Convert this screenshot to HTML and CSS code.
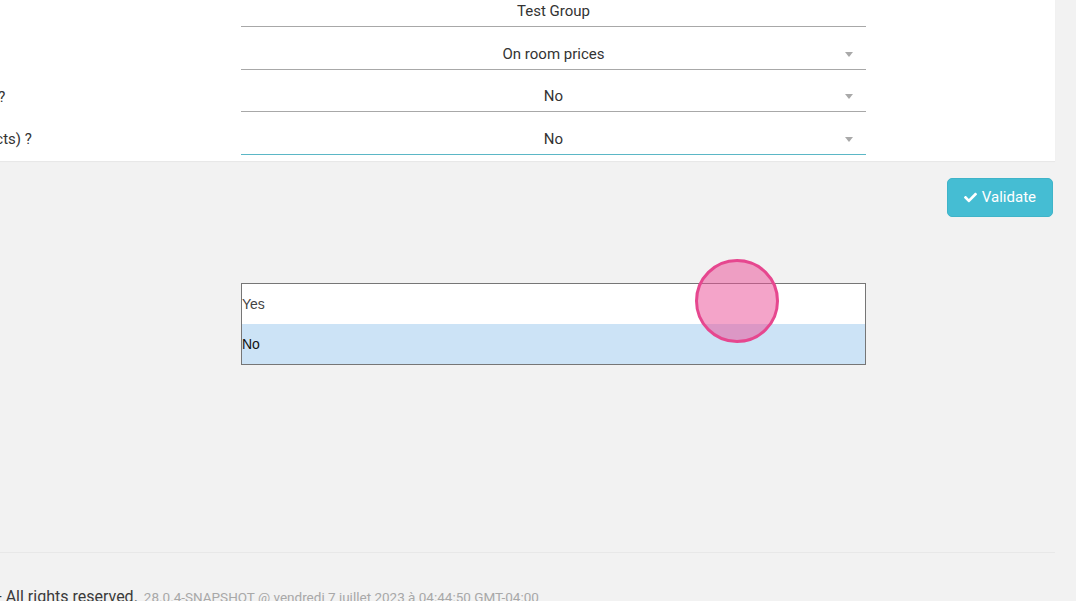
FILE: index.html
```html
<!DOCTYPE html>
<html lang="en">
<head>
    <meta charset="UTF-8">
    <meta name="viewport" content="width=device-width, initial-scale=1.0">
    <title>Group reduction</title>
    <link rel="stylesheet" href="styles.css">
</head>
<body>
    <div class="page">
        <div class="card">
            <form class="form">
                <div class="row">
                    <label>Name</label>
                    <div class="field">Test Group</div>
                </div>
                <div class="row">
                    <label>Reduction</label>
                    <div class="field select">On room prices</div>
                </div>
                <div class="row">
                    <label>Display prices with the taxes for this group ?</label>
                    <div class="field select">No</div>
                </div>
                <div class="row">
                    <label>Hide the prices on all extra services (products) ?</label>
                    <div class="field select focused">No</div>
                </div>
            </form>
        </div>

        <div class="actions">
            <button class="btn-validate">
                <svg class="icon-check" viewBox="0 0 512 512"><path d="M173.9 439.4l-166.4-166.4c-10-10-10-26.2 0-36.2l36.2-36.2c10-10 26.2-10 36.2 0L192 312.7 432.1 72.6c10-10 26.2-10 36.2 0l36.2 36.2c10 10 10 26.2 0 36.2l-294.4 294.4c-10 10-26.2 10-36.2 0z"/></svg>
                Validate
            </button>
        </div>

        <footer class="footer">
            <span class="copy">&copy; 2023 QloApps Hotel Booking </span><span class="rights">- All rights reserved.</span>
            <span class="version">28.0.4-SNAPSHOT @ vendredi 7 juillet 2023 à 04:44:50 GMT-04:00</span>
        </footer>
    </div>

    <div class="listbox">
        <div class="option">Yes</div>
        <div class="option selected">No</div>
    </div>

    <div class="touch"></div>
</body>
</html>
```

FILE: styles.css
```css
* {
    margin: 0;
    padding: 0;
    box-sizing: border-box;
}

body {
    font-family: 'Roboto', 'Liberation Sans', sans-serif;
    background: #f2f2f2;
    color: #333;
    overflow: hidden;
    width: 1076px;
    height: 601px;
}

.page {
    width: 1355px;
    margin: -24px 0 0 -300px;
}

.card {
    background: white;
    padding: 20px 0 6px;
    box-shadow: 0 1px 1px rgba(0,0,0,0.04);
}

.row {
    display: flex;
    align-items: center;
    height: 31px;
    margin-top: 11.5px;
}

.row:first-child {
    margin-top: 0;
}

.row label {
    width: 541px;
    padding-left: 12px;
    font-size: 15px;
    white-space: nowrap;
    overflow: hidden;
}

.field {
    position: relative;
    width: 625px;
    height: 31px;
    line-height: 30px;
    text-align: center;
    font-size: 15px;
    border-bottom: 1px solid #a8a8a8;
}

.field.focused {
    border-bottom-color: #5bb7c6;
}

.select::after {
    content: '';
    position: absolute;
    right: 13px;
    top: 13px;
    border-left: 4px solid transparent;
    border-right: 4px solid transparent;
    border-top: 5px solid #a9a9a9;
}

.actions {
    display: flex;
    justify-content: flex-end;
    padding: 17px 2px 0 0;
    height: 391px;
}

.btn-validate {
    display: flex;
    align-items: center;
    gap: 5px;
    height: 39px;
    padding: 0 16px;
    font-family: 'Roboto', sans-serif;
    font-size: 15px;
    color: white;
    background: #45bdd3;
    border: 1px solid #3fb4c9;
    border-radius: 5px;
}

.icon-check {
    width: 13px;
    height: 13px;
    fill: white;
}

.footer {
    border-top: 1px solid #e8e8e8;
    padding: 34px 0 0 72px;
    white-space: nowrap;
    line-height: 20px;
}

.copy,
.rights {
    font-size: 16px;
    color: #3a3a3a;
}

.version {
    font-size: 13.5px;
    color: #a8a8a8;
    margin-left: 2px;
}

.listbox {
    position: absolute;
    top: 283px;
    left: 241px;
    width: 625px;
    background: white;
    border: 1px solid #767676;
    font-family: 'Liberation Sans', Arial, sans-serif;
    font-size: 14px;
}

.option {
    height: 40px;
    line-height: 40px;
    color: #444;
}

.option.selected {
    background: #cce3f6;
    color: #111;
}

.touch {
    position: absolute;
    left: 695px;
    top: 259px;
    width: 84px;
    height: 84px;
    border-radius: 50%;
    border: 3px solid #e6478f;
    background: rgba(234, 80, 151, 0.52);
}
```
